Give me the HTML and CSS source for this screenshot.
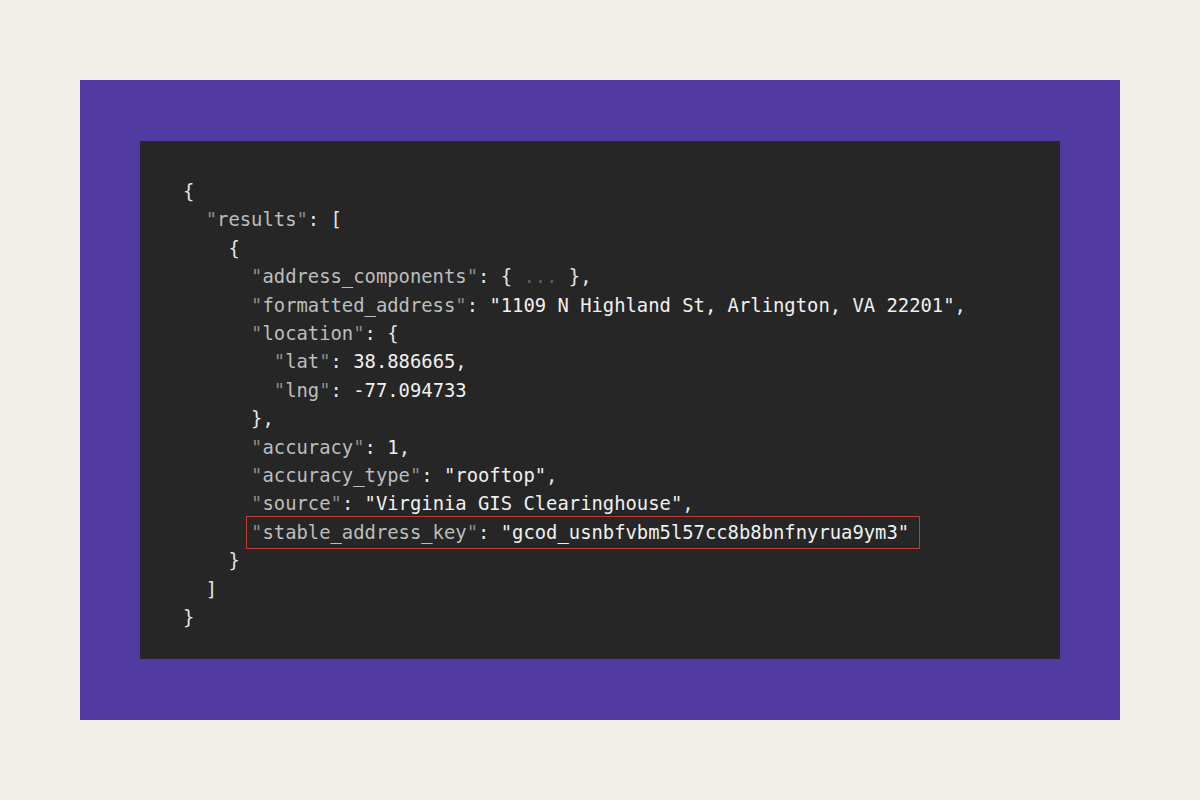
FILE: index.html
```html
<!DOCTYPE html>
<html>
<head>
<meta charset="utf-8">
<link rel="stylesheet" href="styles.css">
</head>
<body>
<div class="frame">
<div class="panel">
<pre class="code"><span class="p">{</span>
  <span class="q">"</span><span class="k">results</span><span class="q">"</span><span class="p">: [</span>
    <span class="p">{</span>
      <span class="q">"</span><span class="k">address_components</span><span class="q">"</span><span class="p">: { </span><span class="dim">...</span><span class="p"> },</span>
      <span class="q">"</span><span class="k">formatted_address</span><span class="q">"</span><span class="p">: </span><span class="v">"1109 N Highland St, Arlington, VA 22201"</span><span class="p">,</span>
      <span class="q">"</span><span class="k">location</span><span class="q">"</span><span class="p">: {</span>
        <span class="q">"</span><span class="k">lat</span><span class="q">"</span><span class="p">: </span><span class="v">38.886665</span><span class="p">,</span>
        <span class="q">"</span><span class="k">lng</span><span class="q">"</span><span class="p">: </span><span class="v">-77.094733</span>
      <span class="p">},</span>
      <span class="q">"</span><span class="k">accuracy</span><span class="q">"</span><span class="p">: </span><span class="v">1</span><span class="p">,</span>
      <span class="q">"</span><span class="k">accuracy_type</span><span class="q">"</span><span class="p">: </span><span class="v">"rooftop"</span><span class="p">,</span>
      <span class="q">"</span><span class="k">source</span><span class="q">"</span><span class="p">: </span><span class="v">"Virginia GIS Clearinghouse"</span><span class="p">,</span>
      <span class="hl"><span class="q">"</span><span class="k">stable_address_key</span><span class="q">"</span><span class="p">: </span><span class="v">"gcod_usnbfvbm5l57cc8b8bnfnyrua9ym3"</span></span>
    <span class="p">}</span>
  <span class="p">]</span>
<span class="p">}</span></pre>
</div>
</div>
</body>
</html>
```

FILE: styles.css
```css
html, body {
  margin: 0;
  padding: 0;
  background: #f2efe9;
}
.frame {
  margin: 80px;
  width: 920px;
  height: 518px;
  padding: 61px 60px 61px 60px;
  background: #513ba0;
}
.panel {
  width: 920px;
  height: 518px;
  background: #262626;
  box-sizing: border-box;
  padding: 37px 0 0 43px;
}
.code {
  margin: 0;
  font-family: "DejaVu Sans Mono", "Liberation Mono", monospace;
  font-size: 18.85px;
  line-height: 28.4px;
  color: #e6e6e6;
}
.p { color: #e4e4e4; }
.q { color: #8c8c8c; }
.k { color: #bdbdbd; }
.v { color: #f0f0f0; }
.dim { color: #5e5e5e; }
.hl {
  display: inline-block;
  outline: 1.5px solid #c23a33;
  outline-offset: 0;
  padding: 2px 10px 2px 4px;
  margin: -2px -10px -2px -4px;
  line-height: 27px;
}
```
